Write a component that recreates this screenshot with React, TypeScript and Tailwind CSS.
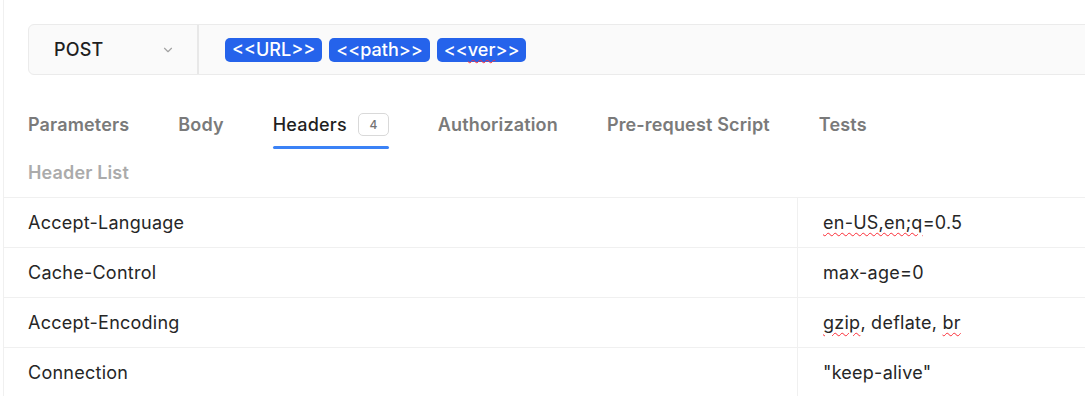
import { ChevronDown } from "lucide-react";

const tabs = ["Parameters", "Body", "Headers", "Authorization", "Pre-request Script", "Tests"];

const squiggle = "underline decoration-wavy decoration-red-500 decoration-1 underline-offset-[3px]";

const rows: { key: string; value: React.ReactNode }[] = [
  {
    key: "Accept-Language",
    value: (
      <>
        <span className={squiggle}>en-US,en;q</span>=0.5
      </>
    ),
  },
  { key: "Cache-Control", value: "max-age=0" },
  {
    key: "Accept-Encoding",
    value: (
      <>
        <span className={squiggle}>gzip</span>
        <span className="whitespace-pre">, deflate, </span>
        <span className={squiggle}>br</span>
      </>
    ),
  },
  { key: "Connection", value: '"keep-alive"' },
];

function Pill({ children }: { children: React.ReactNode }) {
  return (
    <span className="flex h-6 items-center rounded-[5px] bg-[#2563eb] px-[7px] text-[18px] font-medium text-white">
      {children}
    </span>
  );
}

export default function App() {
  return (
    <div
      className="h-[396px] w-[1085px] overflow-hidden bg-white"
      style={{ fontFamily: "Inter, 'Noto Sans', sans-serif" }}
    >
      <div className="ml-[3px] flex h-full flex-col border-l border-[#f0f0f0]">
        <div className="pl-[24px] pt-6">
          <div className="flex h-[51px] w-[1100px] rounded-[6px] border border-[#ebebeb] bg-[#fafafa]">
            <div className="flex w-[170px] items-center justify-between border-r-2 border-[#e8e8e8] pl-[25px] pr-[22px]">
              <span className="text-[18px] font-medium tracking-[0.2px] text-[#1f1f1f]">POST</span>
              <ChevronDown className="h-[14px] w-[14px] text-[#a3a3a3]" strokeWidth={2} />
            </div>
            <div className="flex items-center gap-[7px] pl-[26px]">
              <Pill>&lt;&lt;URL&gt;&gt;</Pill>
              <Pill>&lt;&lt;path&gt;&gt;</Pill>
              <Pill>
                &lt;&lt;<span className={squiggle}>ver</span>&gt;&gt;
              </Pill>
            </div>
          </div>
        </div>

        <div className="mt-[38px] flex gap-[49px] pl-[24px]">
          {tabs.map((t) =>
            t === "Headers" ? (
              <div key={t} className="flex flex-col">
                <div className="flex h-[23px] items-center gap-[11px]">
                  <span className="text-[18px] leading-[23px] font-medium tracking-[0.2px] text-[#1f1f1f]">{t}</span>
                  <span className="flex h-[23px] w-[31px] items-center justify-center rounded-[5px] border border-[#d9d9d9] text-[12px] font-medium text-[#737373]">
                    4
                  </span>
                </div>
                <div className="mt-[10px] h-[3px] rounded-full bg-[#3b82f6]" />
              </div>
            ) : (
              <span key={t} className="h-[23px] text-[18px] leading-[23px] font-semibold tracking-[0.15px] text-[#7a7a7a]">
                {t}
              </span>
            )
          )}
        </div>

        <div className="mt-[12px] pl-[24px] text-[18px] leading-[23px] font-semibold tracking-[0.15px] text-[#ababab]">
          Header List
        </div>

        <div className="mt-[13px] border-t border-[#f0f0f0]">
          {rows.map((r) => (
            <div key={r.key} className="flex h-[50px] border-b border-[#f0f0f0] text-[18px] tracking-[0.25px] text-[#262626]">
              <div className="flex w-[794px] items-center border-r border-[#f0f0f0] pl-[24px]">{r.key}</div>
              <div className="flex flex-1 items-center pl-[25px]">{r.value}</div>
            </div>
          ))}
        </div>
      </div>
    </div>
  );
}
